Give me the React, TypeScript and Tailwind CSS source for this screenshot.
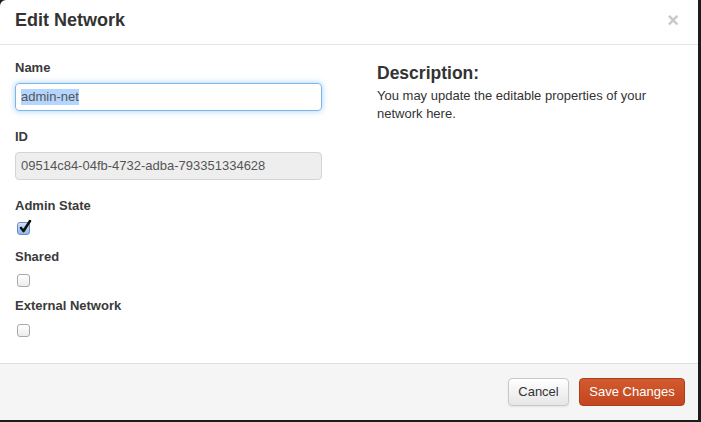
const CheckBox = ({ checked }: { checked?: boolean }) => (
  <div
    className={`relative w-[13px] h-[13px] rounded-[3px] border ${
      checked ? 'border-[#6d8fb8] bg-gradient-to-b from-[#cfe3fa] to-[#8db8ec]' : 'border-[#a8a8a8] bg-gradient-to-b from-white to-[#ececec]'
    }`}
  >
    {checked && (
      <svg width="14" height="15" viewBox="0 0 14 15" className="absolute left-[0px] top-[-4px]">
        <path d="M3 9 L5.5 12 L12 2" fill="none" stroke="#111" strokeWidth="2.6" strokeLinecap="round" strokeLinejoin="round" />
      </svg>
    )}
  </div>
);

const Label = ({ children, className = '' }: { children: React.ReactNode; className?: string }) => (
  <div className={`text-[13px] leading-[18px] font-bold text-[#3a3a3a] ${className}`}>{children}</div>
);

export default function App() {
  return (
    <div className="w-[701px] h-[422px] bg-[#1c1c1c] font-['Liberation_Sans',Arial,sans-serif]">
      <div className="w-[698px] h-[420px] bg-white rounded-tl-[6px] flex flex-col overflow-hidden">
        <div className="h-[45px] border-b border-[#e5e5e5] flex items-center justify-between px-[15px] pb-[4px]">
          <h3 className="text-[18px] font-bold text-[#333] leading-none">Edit Network</h3>
          <span className="text-[20px] font-bold text-[#c8c8c8] leading-none mr-[4px]">×</span>
        </div>

        <div className="flex px-[15px] pt-[14px] h-[318px]">
          <div className="w-[307px]">
            <Label>Name</Label>
            <div className="mt-[6px] h-[28px] border border-[#7fb5e6] rounded-[4px] shadow-[0_0_6px_rgba(82,168,236,0.55)] flex items-center px-[5px] text-[13px] text-[#555]">
              <span className="bg-[#b4d5fe] leading-[16px]">admin-net</span>
            </div>

            <Label className="mt-[17px]">ID</Label>
            <div className="mt-[6px] h-[28px] border border-[#d4d4d4] bg-[#eeeeee] rounded-[4px] flex items-center px-[5px] text-[13px] text-[#555]">
              09514c84-04fb-4732-adba-793351334628
            </div>

            <Label className="mt-[17px]">Admin State</Label>
            <div className="mt-[7px] ml-[2px]">
              <CheckBox checked />
            </div>

            <Label className="mt-[13px]">Shared</Label>
            <div className="mt-[8px] ml-[2px]">
              <CheckBox />
            </div>

            <Label className="mt-[10px]">External Network</Label>
            <div className="mt-[9px] ml-[2px]">
              <CheckBox />
            </div>
          </div>

          <div className="ml-[55px] w-[290px] pt-[4px]">
            <h3 className="text-[17.5px] leading-[20px] font-bold text-[#333]">Description:</h3>
            <p className="mt-[4px] text-[13px] leading-[18px] text-[#333]">
              You may update the editable properties of your network here.
            </p>
          </div>
        </div>

        <div className="flex-1 border-t border-[#dddddd] bg-[#f5f5f5] flex justify-end items-start gap-[10px] pt-[14px] pr-[13px]">
          <button className="h-[28px] w-[61px] rounded-[4px] border border-[#c8c8c8] bg-gradient-to-b from-white to-[#e6e6e6] text-[13px] text-[#333] shadow-[0_1px_2px_rgba(0,0,0,0.08)]">
            Cancel
          </button>
          <button className="h-[28px] w-[106px] rounded-[4px] border border-[#a93f1b] bg-gradient-to-b from-[#d35a2e] to-[#c2461f] text-[13px] text-white">
            Save Changes
          </button>
        </div>
      </div>
    </div>
  );
}
